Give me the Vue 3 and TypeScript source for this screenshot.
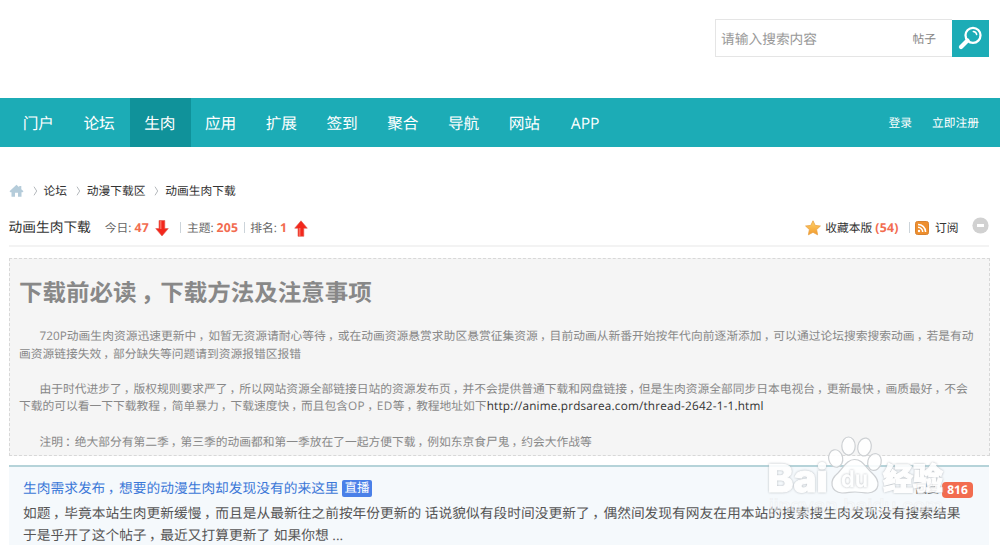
<script setup lang="ts">
interface NavItem { label: string; active?: boolean }

const nav: NavItem[] = [
  { label: '门户' }, { label: '论坛' }, { label: '生肉', active: true }, { label: '应用' },
  { label: '扩展' }, { label: '签到' }, { label: '聚合' }, { label: '导航' }, { label: '网站' }, { label: 'APP' },
]
const crumbs: string[] = ['论坛', '动漫下载区', '动画生肉下载']
</script>

<template>
  <div class="page">
    <header class="top">
      <div class="search">
        <span class="placeholder">请输入搜索内容</span>
        <span class="kind">帖子</span>
      </div>
      <button class="go" aria-label="搜索">
        <svg width="37" height="37" viewBox="0 0 37 37">
          <circle cx="21" cy="15.300" r="7.500" fill="none" stroke="#fff" stroke-width="2.300" />
          <path d="M15.5 20.5L9 27" stroke="#fff" stroke-width="4.2" stroke-linecap="round" />
          <path d="M21.300 11.500Q24.200 11.800 24.700 14.500" fill="none" stroke="#fff" stroke-width="1.500" stroke-linecap="round" />
        </svg>
      </button>
    </header>

    <nav class="nav">
      <a v-for="n in nav" :key="n.label" class="item" :class="{ active: n.active }">{{ n.label }}</a>
      <div class="account"><a>登录</a><a>立即注册</a></div>
    </nav>

    <div class="crumbs">
      <svg class="home" width="15" height="14" viewBox="0 0 15 14">
        <path d="M7.5 .8L.5 7.3L1.5 8.2H2.5V12.8H6V8.8H9V12.8H12.5V8.2H13.5L14.5 7.3L12.3 5.2V2H10.2V3.3Z" fill="#b5ccda" />
      </svg>
      <template v-for="c in crumbs" :key="c">
        <svg class="sep" width="5" height="10" viewBox="0 0 5 10"><path d="M1 .7L3.7 5L1 9.3" fill="none" stroke="#b4b8bc" /></svg>
        <a>{{ c }}</a>
      </template>
    </div>

    <div class="board">
      <h1>动画生肉下载</h1>
      <span class="stat today">今日: <b>47</b></span>
      <svg class="arrow down" width="14" height="17" viewBox="0 0 14 17">
        <path d="M4 .5H9.8V8.6H13.3L7 16L.7 8.6H4Z" fill="#f3271c" stroke="#df5b4f" stroke-width=".6" /><path d="M4.800 1H6.500V9H4.800Z" fill="#fb6a5c" />
      </svg>
      <i class="bar first"></i>
      <span class="stat">主题: <b>205</b></span>
      <i class="bar"></i>
      <span class="stat">排名: <b>1</b></span>
      <svg class="arrow up" width="14" height="17" viewBox="0 0 14 17">
        <path d="M4 16.3H9.8V8.2H13.3L7 .8L.7 8.2H4Z" fill="#f3271c" stroke="#df5b4f" stroke-width=".6" /><path d="M4.800 8H6.500V16H4.800Z" fill="#fb6a5c" />
      </svg>
      <div class="tools">
        <svg width="16" height="16" viewBox="0 0 16 16">
          <defs><linearGradient id="gold" x2="0" y2="1"><stop stop-color="#ffd36b" /><stop offset="1" stop-color="#f29a2d" /></linearGradient></defs>
          <path d="M8 .8L10.2 5.4L15.4 6L11.6 9.6L12.6 14.8L8 12.3L3.4 14.8L4.4 9.6L.6 6L5.8 5.4Z" fill="url(#gold)" stroke="#e9a144" stroke-width=".8" stroke-linejoin="round" />
        </svg>
        <a class="fav">收藏本版 <b>(54)</b></a>
        <i class="bar"></i>
        <svg class="rss" width="14" height="14" viewBox="0 0 14 14">
          <rect x=".5" y=".5" width="13" height="13" rx="2" fill="#ee8e2d" stroke="#d8822f" />
          <circle cx="4" cy="10" r="1.2" fill="#fff" />
          <path d="M3 6.3A4.7 4.7 0 0 1 7.7 11M3 3.4A7.6 7.6 0 0 1 10.6 11" fill="none" stroke="#fff" stroke-width="1.5" />
        </svg>
        <a>订阅</a>
        <svg class="fold" width="17" height="17" viewBox="0 0 17 17"><circle cx="8.5" cy="8.5" r="8.1" fill="#d1d1d1" /><rect x="5" y="7" width="7" height="3" fill="#fff" /></svg>
      </div>
    </div>

    <section class="notice">
      <h2>下载前必读<s>，</s>下载方法及注意事项</h2>
      <p>
        <span class="line in first-line">720P动画生肉资源迅速更新中<s>，</s>如暂无资源请耐心等待<s>，</s>或在动画资源悬赏求助区悬赏征集资源<s>，</s>目前动画从新番开始按年代向前逐渐添加<s>，</s>可以通过论坛搜索搜索动画<s>，</s>若是有动</span>
        <span class="line">画资源链接失效<s>，</s>部分缺失等问题请到资源报错区报错</span>
      </p>
      <p>
        <span class="line in">由于时代进步了<s>，</s>版权规则要求严了<s>，</s>所以网站资源全部链接日站的资源发布页<s>，</s>并不会提供普通下载和网盘链接<s>，</s>但是生肉资源全部同步日本电视台<s>，</s>更新最快<s>，</s>画质最好<s>，</s>不会</span>
        <span class="line">下载的可以看一下下载教程<s>，</s>简单暴力<s>，</s>下载速度快<s>，</s>而且包含<span class="latin">OP</span><s>，</s><span class="latin">ED</span>等<s>，</s>教程地址如下<a class="url">http://anime.prdsarea.com/thread-2642-1-1.html</a></span>
      </p>
      <p><span class="line in">注明<s>：</s>绝大部分有第二季<s>，</s>第三季的动画都和第一季放在了一起方便下载<s>，</s>例如东京食尸鬼<s>，</s>约会大作战等</span></p>
    </section>

    <article class="topic">
      <div class="head">
        <a class="title">生肉需求发布<s>，</s>想要的动漫生肉却发现没有的来这里</a>
        <span class="live">直播</span>
        <span class="reply">回复</span><b class="count">816</b>
      </div>
      <div class="body">
        <span class="line">如题<s>，</s>毕竟本站生肉更新缓慢<s>，</s>而且是从最新往之前按年份更新的 话说貌似有段时间没更新了<s>，</s>偶然间发现有网友在用本站的搜索搜生肉发现没有搜索结果</span>
        <span class="line">于是乎开了这个帖子<s>，</s>最近又打算更新了 如果你想 ...</span>
      </div>
    </article>

    <svg class="mark" width="182" height="100" viewBox="760 430 182 100">
      <g fill="#fff" fill-opacity=".88" stroke="#cdd0d3" stroke-width="1.200">
        <ellipse cx="835.7" cy="459.5" rx="7" ry="8.800" transform="rotate(-12 835.7 459.5)" />
        <ellipse cx="848.5" cy="447" rx="6.7" ry="9" />
        <ellipse cx="864.5" cy="448" rx="6.7" ry="9" transform="rotate(12 864.5 448)" />
        <ellipse cx="874.5" cy="463" rx="6.7" ry="8.5" transform="rotate(14 874.5 463)" />
        <path d="M854.500 460.500C847 460.500 844 468 838 474C828 482 831 493 842 494C848 494 850 493 855 493C860 493 863 494 868 494C880 493 881 482 872 474C865 468 863 460.500 854.500 460.500Z" />
      </g>
      <g class="brand">
        <text x="767.500" y="492.500" textLength="60" lengthAdjust="spacingAndGlyphs" font-size="38">Bai</text>
        <text class="du" x="841" y="487.500" textLength="27" lengthAdjust="spacingAndGlyphs" font-size="23">du</text>
        <text x="883" y="490.500" textLength="60" lengthAdjust="spacingAndGlyphs" font-size="31">经验</text>
      </g>
      <text class="site" x="769" y="513" textLength="174" lengthAdjust="spacingAndGlyphs" font-size="19">jingyan.baidu.com</text>
    </svg>
  </div>
</template>

<style>
html, body { margin: 0; overflow: hidden; }
</style>

<style scoped>
.page { position: relative; width: 1000px; height: 545px; overflow: hidden; background: #fff; color: #444; font: 11.76px/18px "Open Sans", "Noto Sans CJK SC", sans-serif; white-space: nowrap; text-rendering: geometricPrecision; font-kerning: none; }
.page * { box-sizing: border-box; }
/* full-width punctuation sits mid-cell */
s { position: relative; left: .18em; text-decoration: none; }
.top { display: flex; justify-content: flex-end; height: 98px; padding: 19px 11px 0 0; }
.search { display: flex; align-items: center; justify-content: space-between; width: 237px; height: 38px; padding: 2px 16px 0 5px; border: 1px solid #e5e5e5; border-right: 0; color: #999; }
.placeholder { padding-top: 2px; font-size: 13.72px; }
.kind { color: #888; }
.go { width: 37px; height: 37px; margin-top: 1px; padding: 0; border: 0; background: #1cacb6; }
.go svg { display: block; }
.nav { display: flex; height: 49px; padding-left: 8.500px; background: #1cacb6; color: #fff; }
.item { width: 60.76px; padding-top: 1px; font-size: 15.68px; line-height: 48px; text-align: center; text-indent: -1px; }
.item.active { background: #10929a; }
.account { display: flex; gap: 20px; margin-left: auto; padding-right: 21px; line-height: 50px; }
.crumbs { display: flex; align-items: center; height: 20px; margin: 34px 0 0 9px; color: #333; }
.home { margin-right: 8.500px; }
.sep { margin-right: 6px; }
.crumbs a { margin-right: 8.800px; }
.board { display: flex; align-items: center; width: 980px; height: 37px; margin: 9px 0 0 8.500px; border-bottom: 2px solid #f3f3f3; color: #666; }
h1 { margin: 0 14px 0 0; color: #333; font-size: 13.72px; font-weight: 400; }
b { color: #f26c4f; font-size: 12.300px; font-weight: 700; }
.arrow { margin: 2px 0 0 6px; }
.bar { width: 1px; height: 11px; margin: 0 5.500px; background: #ccd4da; }
.bar.first { margin-left: 11.500px; }
.arrow.up { margin-left: 7px; }
.stat b { letter-spacing: .2px; }
.tools { display: flex; align-items: center; margin-left: auto; color: #333; }
.fav { margin-left: 4px; }
.fav b { letter-spacing: .2px; }
.tools .bar { margin-left: 10px; }
.rss { margin-right: 6px; }
.fold { margin: -4px 0 0 13px; }
.notice { width: 981px; height: 198px; margin: 11px 0 0 9px; padding: 14px 0 0 9px; border: 1px dashed #d8d8d8; background: #f5f5f5; color: #888; line-height: 17.64px; }
h2 { height: 55px; margin: 0; font-size: 23.52px; line-height: 38px; font-weight: 700; }
p { margin: 0 0 17.500px; }
.line { display: block; }
.line.in { padding-left: 20.500px; }
.first-line { letter-spacing: .024px; }
.latin { letter-spacing: .4px; }
.url { color: #333; letter-spacing: .188px; }
.topic { width: 980px; height: 81px; margin: 9px 0 0 9px; padding: 11px 24px 0 14px; border-top: 2px solid #b5d3d9; background: #f5f9fc; font-size: 13.72px; color: #555; }
.head { display: flex; align-items: center; height: 22px; }
.title { color: #3c78d8; }
.live { width: 30px; height: 17px; margin: -2px 0 0 3.500px; border-radius: 2px; background: #4a80e8; color: #fff; font-size: 12.500px; line-height: 16px; text-align: center; }
.reply { margin-left: auto; font-size: 11.76px; }
.count { width: 31px; height: 16px; margin: 1px -8px 0 3px; border-radius: 4px; background: #f26c4f; color: #fff; font-size: 12px; line-height: 16px; text-align: center; }
.body { line-height: 21.500px; padding-top: 3px; }
.body .line { letter-spacing: .015px; }
.mark { position: absolute; left: 760px; top: 429px; overflow: visible; }
.brand { filter: drop-shadow(0 0 .8px #aeb3b8); }
.brand text { font-family: Inter, "Noto Sans CJK SC", sans-serif; font-weight: 800; fill: #fff; stroke: #fff; stroke-width: 1.200; }
.brand .du { font-weight: 600; stroke-width: .3; }
.brand { opacity: .9; }
.site { font-family: "Liberation Sans", sans-serif; fill: #fff; fill-opacity: .5; stroke: #e5e8ea; stroke-opacity: .5; stroke-width: .7; }
</style>
